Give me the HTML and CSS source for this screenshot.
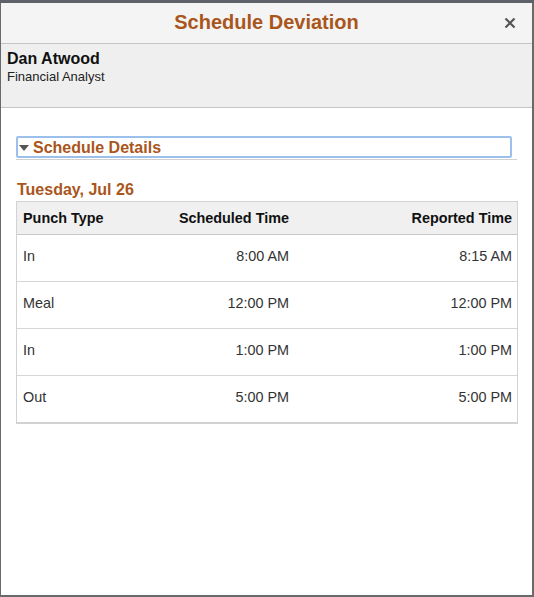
FILE: index.html
```html
<!DOCTYPE html>
<html lang="en">
<head>
<meta charset="utf-8">
<title>Schedule Deviation</title>
<link rel="stylesheet" href="styles.css">
</head>
<body>
<div class="backdrop"></div>
<div class="modal">
  <header class="modal-header">
    <h1 class="modal-title">Schedule Deviation</h1>
    <button class="close-btn" aria-label="Close">
      <svg width="12" height="12" viewBox="0 0 12 12"><path d="M1.5 1.5 L10.5 10.5 M10.5 1.5 L1.5 10.5" stroke="#555" stroke-width="2.2" fill="none"/></svg>
    </button>
  </header>
  <section class="employee">
    <div class="emp-name">Dan Atwood</div>
    <div class="emp-title">Financial Analyst</div>
  </section>
  <main class="content">
    <div class="collapsible">
      <button class="collapse-btn">
        <span class="triangle"></span>
        <span class="collapse-label">Schedule Details</span>
      </button>
    </div>
    <h2 class="day">Tuesday, Jul 26</h2>
    <div class="grid">
      <div class="row head">
        <div class="cell">Punch Type</div>
        <div class="cell num">Scheduled Time</div>
        <div class="cell num">Reported Time</div>
      </div>
      <div class="row">
        <div class="cell">In</div>
        <div class="cell num">8:00 AM</div>
        <div class="cell num">8:15 AM</div>
      </div>
      <div class="row">
        <div class="cell">Meal</div>
        <div class="cell num">12:00 PM</div>
        <div class="cell num">12:00 PM</div>
      </div>
      <div class="row">
        <div class="cell">In</div>
        <div class="cell num">1:00 PM</div>
        <div class="cell num">1:00 PM</div>
      </div>
      <div class="row last">
        <div class="cell">Out</div>
        <div class="cell num">5:00 PM</div>
        <div class="cell num">5:00 PM</div>
      </div>
    </div>
  </main>
</div>
</body>
</html>
```
FILE: styles.css
```css
* { box-sizing: border-box; }
html, body {
  margin: 0;
  padding: 0;
  background: #5d6268;
  font-family: "Liberation Sans", Arial, sans-serif;
  height: 597px;
  overflow: hidden;
}
.backdrop {
  height: 3px;
  background: #5d6268;
}
.modal {
  height: 594px;
  background: #fff;
  border-left: 1px solid #6a6a6a;
  border-right: 2px solid #6a6a6a;
  border-bottom: 2px solid #6a6a6a;
  display: flex;
  flex-direction: column;
}
.modal-header {
  height: 41px;
  background: #f4f4f4;
  border-bottom: 1px solid #c4c4c4;
  display: flex;
  align-items: center;
  justify-content: center;
  position: relative;
}
.modal-title {
  margin: 0;
  font-size: 20px;
  font-weight: bold;
  color: #a9561c;
  line-height: 24px;
  padding-bottom: 2px;
}
.close-btn {
  position: absolute;
  right: 15px;
  top: 13px;
  width: 14px;
  height: 14px;
  padding: 0;
  border: 0;
  background: transparent;
  display: flex;
  align-items: center;
  justify-content: center;
}
.employee {
  height: 64px;
  background: #efefef;
  border-bottom: 1px solid #c4c4c4;
  padding: 6px 6px 0;
}
.emp-name {
  font-size: 16px;
  font-weight: bold;
  color: #111;
  line-height: 18px;
}
.emp-title {
  font-size: 13px;
  color: #222;
  line-height: 17px;
}
.content {
  padding: 28px 16px 0 15px;
}
.collapsible {
  width: 501px;
  border-bottom: 1px solid #d0d0d0;
  padding-bottom: 1px;
}
.collapse-btn {
  display: flex;
  align-items: center;
  width: 496px;
  height: 22px;
  margin: 0;
  padding: 0 0 0 1px;
  border: 2px solid #9cc0ec;
  border-radius: 2px;
  background: #fff;
  font-family: inherit;
}
.triangle {
  width: 0;
  height: 0;
  border-left: 5.5px solid transparent;
  border-right: 5.5px solid transparent;
  border-top: 6px solid #555;
  margin: 1px 4px 0 0;
}
.collapse-label {
  font-size: 16px;
  font-weight: bold;
  color: #a9561c;
  line-height: 17px;
}
.day {
  margin: 20px 0 0 1px;
  font-size: 16px;
  font-weight: bold;
  color: #a9561c;
  line-height: 20px;
}
.grid {
  margin-top: 1px;
  width: 502px;
  border: 1px solid #d2d2d2;
  border-bottom: 2px solid #d2d2d2;
}
.row {
  display: grid;
  grid-template-columns: 150px 127px 1fr;
  height: 47px;
  align-items: center;
  border-bottom: 1px solid #d6d6d6;
  font-size: 14.4px;
  color: #333;
}
.row.last { border-bottom: 0; height: 46px; }
.row.head {
  height: 33px;
  background: #f0f0f0;
  border-bottom: 1px solid #c8c8c8;
  font-weight: bold;
  color: #111;
}
.cell {
  padding: 0 5px 4px 6px;
  white-space: nowrap;
}
.row.head .cell { padding-bottom: 1px; }
.cell.num { text-align: right; }
```
